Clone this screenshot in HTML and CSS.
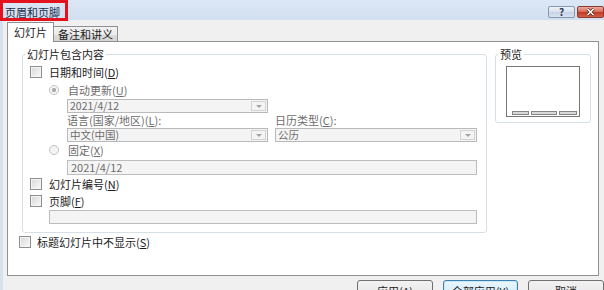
FILE: index.html
```html
<!DOCTYPE html>
<html lang="zh-CN">
<head>
<meta charset="utf-8">
<title>页眉和页脚</title>
<link rel="stylesheet" href="styles.css">
</head>
<body>
<div class="window">
  <div class="titlebar">
    <span class="title">页眉和页脚</span>
    <div class="caption">
      <div class="cap-btn help">?</div>
      <div class="cap-btn close">
        <svg width="11" height="8" viewBox="0 0 11 8"><path d="M2.5 1 L8.5 7 M8.5 1 L2.5 7" stroke="#5a1c12" stroke-width="3" fill="none"/><path d="M2.5 1 L8.5 7 M8.5 1 L2.5 7" stroke="#ffffff" stroke-width="1.6" fill="none"/></svg>
      </div>
    </div>
    <div class="annot"></div>
  </div>
  <div class="client">
    <div class="tabs">
      <div class="tab active">幻灯片</div>
      <div class="tab">备注和讲义</div>
    </div>
    <div class="panel">
      <div class="groups">
        <div class="group main">
          <div class="legend">幻灯片包含内容</div>
          <div class="row r-date"><span class="cb"></span><span>日期和时间(<u>D</u>)</span></div>
          <div class="row r-auto disabled"><span class="rb on"></span><span>自动更新(<u>U</u>)</span></div>
          <div class="combo c-date"><span class="val">2021/4/12</span><span class="drop"></span></div>
          <div class="row r-labels disabled"><span class="l1">语言(国家/地区)(<u>L</u>):</span><span>日历类型(<u>C</u>):</span></div>
          <div class="combos">
            <div class="combo c-lang"><span class="val">中文(中国)</span><span class="drop"></span></div>
            <div class="combo c-cal"><span class="val">公历</span><span class="drop"></span></div>
          </div>
          <div class="row r-fixed disabled"><span class="rb"></span><span>固定(<u>X</u>)</span></div>
          <div class="textbox t-fixed">2021/4/12</div>
          <div class="row r-num"><span class="cb"></span><span>幻灯片编号(<u>N</u>)</span></div>
          <div class="row r-foot"><span class="cb"></span><span>页脚(<u>F</u>)</span></div>
          <div class="textbox t-foot"></div>
        </div>
        <div class="group preview">
          <div class="legend">预览</div>
          <div class="slide">
            <span class="bar b1"></span>
            <span class="bar b2"></span>
            <span class="bar b3"></span>
          </div>
        </div>
      </div>
      <div class="row r-title"><span class="cb"></span><span>标题幻灯片中不显示(<u>S</u>)</span></div>
    </div>
    <div class="buttons">
      <div class="btn b-apply">应用(<u>A</u>)</div>
      <div class="btn default b-all">全部应用(<u>Y</u>)</div>
      <div class="btn b-cancel">取消</div>
    </div>
  </div>
</div>
</body>
</html>
```

FILE: styles.css
```css
html, body {
  margin: 0;
  padding: 0;
}
body {
  width: 604px;
  height: 290px;
  overflow: hidden;
  font-family: "Noto Sans CJK SC", "Liberation Sans", sans-serif;
  font-size: 11px;
  line-height: 14px;
  color: #1c1c1c;
  background: #f0f0f0;
}
u {
  text-decoration-thickness: 1px;
  text-underline-offset: 1px;
}
.window {
  width: 604px;
  height: 290px;
  display: flex;
  flex-direction: column;
}
.titlebar {
  position: relative;
  height: 20px;
  flex: none;
  display: flex;
  align-items: flex-start;
  background: linear-gradient(#dce7f5, #d2dfef);
}
.title {
  margin: 5px 0 0 5px;
  line-height: 14px;
  color: #1d2c4a;
}
.caption {
  margin-left: auto;
  margin-top: 6px;
  display: flex;
  gap: 2px;
}
.cap-btn {
  width: 27px;
  height: 12px;
  box-sizing: border-box;
  border-radius: 2px;
  display: flex;
  align-items: center;
  justify-content: center;
  font-size: 10px;
  line-height: 10px;
  font-weight: bold;
}
.help {
  border: 1px solid #8797ae;
  background: linear-gradient(#eef3f9, #d6e0ee 50%, #c6d3e6 51%, #d7e2f1);
  color: #2a3b55;
}
.close {
  border: 1px solid #8d3b2e;
  background: linear-gradient(#eaa99b, #d56a56 50%, #c1371f 51%, #d2604a);
}
.annot {
  position: absolute;
  left: 0;
  top: 0;
  width: 68px;
  height: 21px;
  box-sizing: border-box;
  border: 3px solid #e3121c;
  pointer-events: none;
}
.client {
  flex: 1;
  min-height: 0;
  display: flex;
  flex-direction: column;
  border-left: 3px solid #d5e1ef;
  padding-left: 4px;
  background: #f0f0f0;
}
.tabs {
  display: flex;
  align-items: flex-end;
  height: 20px;
  margin-top: 2px;
  margin-bottom: -1px;
  flex: none;
}
.tab {
  box-sizing: border-box;
  border: 1px solid #8e9093;
  border-bottom: none;
  text-align: center;
  line-height: 14px;
}
.tab.active {
  position: relative;
  z-index: 1;
  width: 47px;
  height: 20px;
  padding-top: 2px;
  background: #fff;
}
.tab:not(.active) {
  width: 65px;
  height: 16px;
  margin-left: -1px;
  background: linear-gradient(#f2f2f2, #ebebeb 50%, #dddddd 51%, #d2d2d2);
}
.panel {
  box-sizing: border-box;
  width: 592px;
  height: 235px;
  flex: none;
  border: 1px solid #8e9093;
  background: #fff;
}
.groups {
  display: flex;
  align-items: flex-start;
  gap: 8px;
  padding: 12px 0 0 14px;
}
.group {
  box-sizing: border-box;
  border: 1px solid #d5dfe5;
  border-radius: 3px;
}
.group.main {
  width: 465px;
  padding-bottom: 8px;
}
.group.preview {
  width: 96px;
  padding-bottom: 5px;
}
.legend {
  margin: -8px 0 0 2px;
  padding: 0 2px;
  width: fit-content;
  background: #fff;
  line-height: 14px;
}
.row {
  display: flex;
  align-items: center;
  height: 14px;
  white-space: nowrap;
}
.disabled {
  color: #6d6d6d;
}
.cb {
  flex: none;
  width: 12px;
  height: 12px;
  box-sizing: border-box;
  margin-right: 7px;
  border: 1px solid #8f8f8f;
  background: linear-gradient(135deg, #d6d6d6, #fbfbfb);
  box-shadow: inset 0 0 0 1px #f4f4f4;
}
.rb {
  flex: none;
  width: 10px;
  height: 10px;
  box-sizing: border-box;
  margin-right: 9px;
  border-radius: 50%;
  border: 1px solid #c3c3c3;
  background: #f4f4f4;
}
.rb.on {
  background: radial-gradient(circle, #a9a9a9 0 1.8px, #f4f4f4 2.4px);
}
.r-date { margin-top: 4px; padding-left: 7px; }
.r-auto { margin-top: 4px; padding-left: 26px; }
.combo {
  display: flex;
  align-items: center;
  box-sizing: border-box;
  height: 14px;
  border: 1px solid #b9b9b9;
  background: #f4f4f4;
  color: #6d6d6d;
}
.val {
  flex: 1;
  padding-left: 2px;
  font-size: 10.5px;
  line-height: 12px;
  white-space: nowrap;
}
.drop {
  flex: none;
  width: 15px;
  height: 10px;
  margin-right: 1px;
  box-sizing: border-box;
  border: 1px solid #d2d2d2;
  display: flex;
  align-items: center;
  justify-content: center;
}
.drop::after {
  content: "";
  border-left: 3px solid transparent;
  border-right: 3px solid transparent;
  border-top: 3px solid #a3a3a3;
}
.c-date { margin: 2px 0 0 44px; width: 201px; }
.r-labels { padding-left: 44px; }
.l1 { width: 208px; }
.combos {
  display: flex;
  gap: 7px;
  margin: 1px 0 0 44px;
}
.c-lang { width: 201px; }
.c-cal { width: 202px; }
.r-fixed { margin-top: 1px; padding-left: 26px; }
.textbox {
  box-sizing: border-box;
  border: 1px solid #bdbdbd;
  background: #f4f4f4;
  color: #6d6d6d;
  padding-left: 3px;
  line-height: 13px;
}
.t-fixed { margin: 3px 0 0 44px; width: 410px; height: 15px; }
.r-num { margin-top: 2px; padding-left: 7px; }
.r-foot { margin-top: 3px; padding-left: 7px; }
.t-foot { margin: 2px 0 0 26px; width: 428px; height: 14px; }
.slide {
  box-sizing: border-box;
  width: 74px;
  height: 51px;
  margin: 5px 0 0 10px;
  border: 1px solid #777;
  background: #fff;
  display: flex;
  align-items: flex-end;
  gap: 2px;
  padding: 0 0 1px 5px;
}
.bar {
  box-sizing: border-box;
  height: 4px;
  border: 1px solid #858585;
  background: #d9d9d9;
}
.b1 { width: 17px; }
.b2 { width: 26px; }
.b3 { width: 18px; }
.r-title { margin-top: 2px; padding-left: 11px; }
.r-title .cb { margin-right: 6px; }
.buttons {
  display: flex;
  justify-content: flex-end;
  gap: 10px;
  margin-top: 4px;
  flex: none;
}
.btn {
  box-sizing: border-box;
  height: 23px;
  width: 76px;
  border: 1px solid #707070;
  border-radius: 3px;
  background: linear-gradient(#f2f2f2, #ebebeb 45%, #dddddd 50%, #cfcfcf);
  text-align: center;
  line-height: 21px;
  font-size: 11px;
}
.b-all { width: 75px; }
.btn.default {
  border-color: #3c7fb1;
  background: linear-gradient(#eaf6fd, #d9f0fc 45%, #bee6fd 50%, #a7d9f5);
  box-shadow: inset 0 0 0 1px #c8e8f8;
}
```
